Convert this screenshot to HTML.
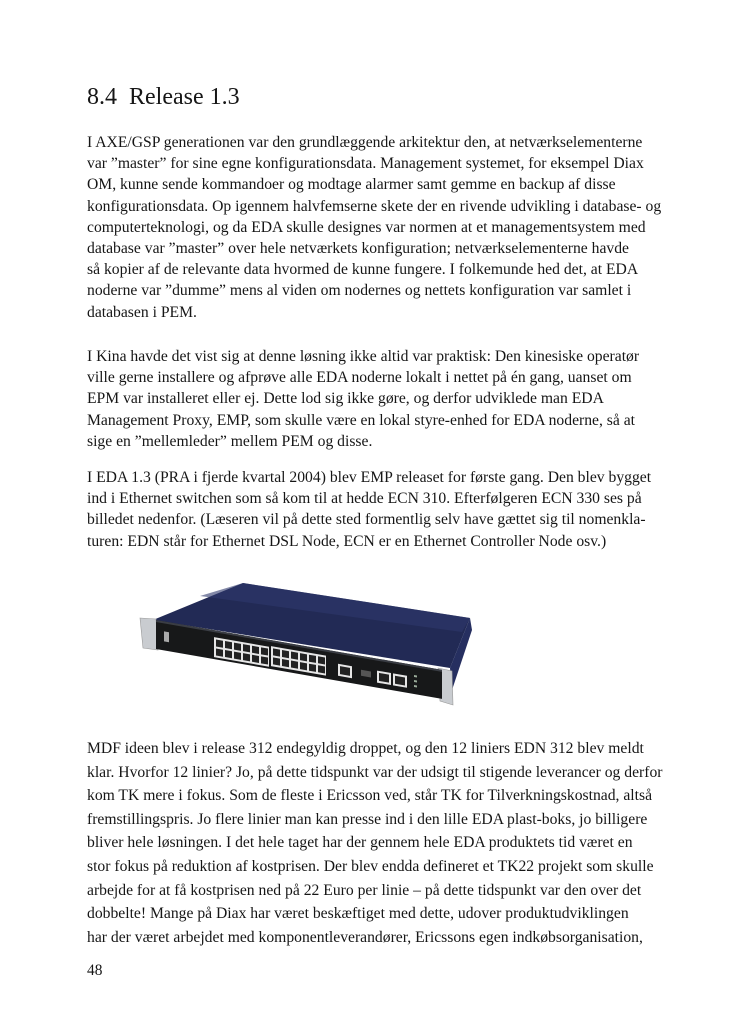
<!DOCTYPE html>
<html><head><meta charset="utf-8">
<style>
html,body{margin:0;padding:0;background:#fff;}
body{width:738px;height:1024px;position:relative;overflow:hidden;font-family:"Liberation Serif",serif;color:#161616;}
.t{position:absolute;left:87px;top:80px;font-size:24px;line-height:34px;white-space:nowrap;}
.p{position:absolute;left:87px;font-size:15.65px;line-height:21.2px;white-space:nowrap;}
.pg{position:absolute;left:87px;top:960px;font-size:15.4px;line-height:21px;}
</style></head><body>
<div class="t">8.4&nbsp; Release 1.3</div>
<div class="p" style="top:132px">I AXE/GSP generationen var den grundlæggende arkitektur den, at netværkselementerne<br>var ”master” for sine egne konfigurationsdata. Management systemet, for eksempel Diax<br>OM, kunne sende kommandoer og modtage alarmer samt gemme en backup af disse<br>konfigurationsdata. Op igennem halvfemserne skete der en rivende udvikling i database- og<br>computerteknologi, og da EDA skulle designes var normen at et managementsystem med<br>database var ”master” over hele netværkets konfiguration; netværkselementerne havde<br>så kopier af de relevante data hvormed de kunne fungere. I folkemunde hed det, at EDA<br>noderne var ”dumme” mens al viden om nodernes og nettets konfiguration var samlet i<br>databasen i PEM.</div>
<div class="p" style="top:346px">I Kina havde det vist sig at denne løsning ikke altid var praktisk: Den kinesiske operatør<br>ville gerne installere og afprøve alle EDA noderne lokalt i nettet på én gang, uanset om<br>EPM var installeret eller ej. Dette lod sig ikke gøre, og derfor udviklede man EDA<br>Management Proxy, EMP, som skulle være en lokal styre-enhed for EDA noderne, så at<br>sige en ”mellemleder” mellem PEM og disse.</div>
<div class="p" style="top:467px">I EDA 1.3 (PRA i fjerde kvartal 2004) blev EMP releaset for første gang. Den blev bygget<br>ind i Ethernet switchen som så kom til at hedde ECN 310. Efterfølgeren ECN 330 ses på<br>billedet nedenfor. (Læseren vil på dette sted formentlig selv have gættet sig til nomenkla-<br>turen: EDN står for Ethernet DSL Node, ECN er en Ethernet Controller Node osv.)</div>

<svg style="position:absolute;left:0;top:0" width="738" height="1024">
  <polygon points="243,583 470,618 450,668 153,620" fill="#222a55"/>
  <polygon points="243,583 470,618 462,632 200,596" fill="#2e386c" opacity="0.6"/>
  <polygon points="450,668 470,618 472,630 452,690" fill="#262f60"/>
  <polygon points="140,618 156,619 158,650 143,648" fill="#c9ccd0" stroke="#999" stroke-width="0.6"/>
  <polygon points="438,668 452,671 453,705 440,701" fill="#c9ccd0" stroke="#999" stroke-width="0.6"/>
  <g transform="translate(156,620) skewY(9.9)">
    <rect x="0" y="0" width="286" height="29" fill="#171819"/>
    <rect x="0" y="0" width="286" height="2" fill="#3a3d44"/>
    <rect x="8" y="10" width="5" height="10" fill="#aaa"/>
    <g fill="#e6e6e6">
      <rect x="58" y="7" width="55" height="20"/>
      <rect x="115" y="6" width="55" height="20"/>
      <rect x="182" y="12" width="14" height="12"/>
      <rect x="221" y="12" width="14" height="12"/>
      <rect x="237" y="12" width="14" height="12"/>
    </g>
    <g fill="#222">
      <rect x="60" y="9" width="7" height="7"/><rect x="69" y="9" width="7" height="7"/><rect x="78" y="9" width="7" height="7"/><rect x="87" y="9" width="7" height="7"/><rect x="96" y="9" width="7" height="7"/><rect x="105" y="9" width="7" height="7"/>
      <rect x="60" y="18" width="7" height="7"/><rect x="69" y="18" width="7" height="7"/><rect x="78" y="18" width="7" height="7"/><rect x="87" y="18" width="7" height="7"/><rect x="96" y="18" width="7" height="7"/><rect x="105" y="18" width="7" height="7"/>
      <rect x="117" y="8" width="7" height="7"/><rect x="126" y="8" width="7" height="7"/><rect x="135" y="8" width="7" height="7"/><rect x="144" y="8" width="7" height="7"/><rect x="153" y="8" width="7" height="7"/><rect x="162" y="8" width="7" height="7"/>
      <rect x="117" y="17" width="7" height="7"/><rect x="126" y="17" width="7" height="7"/><rect x="135" y="17" width="7" height="7"/><rect x="144" y="17" width="7" height="7"/><rect x="153" y="17" width="7" height="7"/><rect x="162" y="17" width="7" height="7"/>
      <rect x="184" y="14" width="10" height="8"/><rect x="223" y="14" width="10" height="8"/><rect x="239" y="14" width="10" height="8"/>
    </g>
    <rect x="205" y="14" width="10" height="6" fill="#555"/>
    <g fill="#9a9"><rect x="258" y="10" width="3" height="2"/><rect x="258" y="15" width="3" height="2"/><rect x="258" y="20" width="3" height="2"/></g>
  </g>
</svg>

<div class="p" style="top:737px;line-height:23.6px">MDF ideen blev i release 312 endegyldig droppet, og den 12 liniers EDN 312 blev meldt<br>klar. Hvorfor 12 linier? Jo, på dette tidspunkt var der udsigt til stigende leverancer og derfor<br>kom TK mere i fokus. Som de fleste i Ericsson ved, står TK for Tilverkningskostnad, altså<br>fremstillingspris. Jo flere linier man kan presse ind i den lille EDA plast-boks, jo billigere<br>bliver hele løsningen. I det hele taget har der gennem hele EDA produktets tid været en<br>stor fokus på reduktion af kostprisen. Der blev endda defineret et TK22 projekt som skulle<br>arbejde for at få kostprisen ned på 22 Euro per linie – på dette tidspunkt var den over det<br>dobbelte! Mange på Diax har været beskæftiget med dette, udover produktudviklingen<br>har der været arbejdet med komponentleverandører, Ericssons egen indkøbsorganisation,</div>
<div class="pg">48</div>
</body></html>
